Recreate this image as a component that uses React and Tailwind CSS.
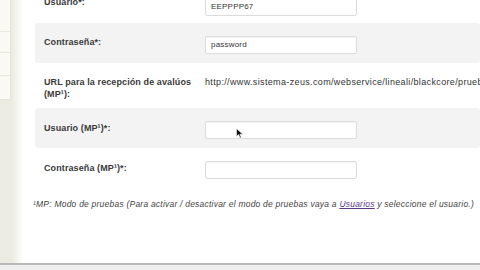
const Field = ({ value }) => (
  <div className="w-[152px] h-[18px] bg-white border border-[#dcdcdc] rounded-[2px] shadow-[inset_0_1px_1px_rgba(0,0,0,0.05)] flex items-center pl-[5px] text-[8px] tracking-[0.2px] text-[#333]">
    {value}
  </div>
);

const Row = ({ label, gray, h, children, top = false, labelPos = "-mt-[3px]" }) => (
  <div
    className={`flex items-center ${h} ${gray ? "bg-[#f3f3f3]" : "bg-white"} rounded-[3px] ${top ? "-mt-[17px]" : ""}`}
  >
    <div className={`w-[170px] pl-[9px] pr-2 text-[9px] font-bold tracking-[0.1px] text-[#3a3a3a] leading-[12px] ${labelPos}`}>
      {label}
    </div>
    <div className="flex-1 min-w-0">{children}</div>
  </div>
);

const App = () => {
  return (
    <div
      className="w-[480px] h-[270px] overflow-hidden flex flex-col bg-white"
      style={{ fontFamily: '"Liberation Sans", Arial, sans-serif' }}
    >
      <div className="flex flex-1 min-h-0">
        {/* SIDEBAR */}
        <div className="w-[24px] flex bg-gradient-to-r from-[#ecebe1] via-[#edece3] to-white">
          <div className="w-[11px] h-[100px] bg-[#fafaf5] border-r border-[#e6e5da] flex flex-col">
            <div className="h-[32px] border-b border-[#e8e7dc]" />
            <div className="h-[21px] border-b border-[#e8e7dc]" />
            <div className="h-[23px] border-b border-[#e8e7dc]" />
            <div className="flex-1 border-b border-[#e8e7dc]" />
          </div>
        </div>

        {/* MAIN */}
        <div className="flex-1 min-w-0 relative">
          <div className="pl-[11px] flex flex-col">
            <Row label="Usuario*:" h="h-[40px]" top>
              <div className="mt-[7px]">
                <Field value="EEPPPP67" />
              </div>
            </Row>
            <Row label="Contraseña*:" h="h-[40px]" gray>
              <div className="mt-[3px]">
                <Field value="password" />
              </div>
            </Row>
            <Row
              label={
                <>
                  URL para la recepción de avalúos
                  <br />
                  (MP¹):
                </>
              }
              h="h-[45px]"
              labelPos="mt-[5px]"
            >
              <div className="whitespace-nowrap text-[9px] tracking-[0.35px] text-[#333] -mt-[5px]">
                http://www.sistema-zeus.com/webservice/lineali/blackcore/pruebas
              </div>
            </Row>
            <Row label="Usuario (MP¹)*:" h="h-[40px]" gray labelPos="-mt-[1px]">
              <div className="mt-[3px]">
                <Field value="" />
              </div>
            </Row>
            <Row label="Contraseña (MP¹)*:" h="h-[42px]">
              <div className="mt-[2px]">
                <Field value="" />
              </div>
            </Row>
          </div>

          <p className="mt-[8px] pl-[9px] whitespace-nowrap italic text-[8.5px] tracking-[0.22px] text-[#444]">
            ¹MP: Modo de pruebas (Para activar / desactivar el modo de pruebas vaya a{" "}
            <span className="underline text-[#5b3a8c]">Usuarios</span> y seleccione el usuario.)
          </p>

          {/* CURSOR */}
          <svg
            className="absolute left-[212px] top-[128px]"
            width="8"
            height="11"
            viewBox="0 0 8 11"
          >
            <path d="M0.5 0.5 L0.5 8.5 L2.6 6.6 L4 10 L5.3 9.4 L3.9 6.2 L6.8 6.2 Z" fill="#111" stroke="#fff" strokeWidth="0.6" />
          </svg>
        </div>
      </div>

      {/* BOTTOM BAR */}
      <div className="h-[7px] border-t-2 border-[#b8b8b8] bg-[#eeeeee]" />
    </div>
  );
};

export default App;
